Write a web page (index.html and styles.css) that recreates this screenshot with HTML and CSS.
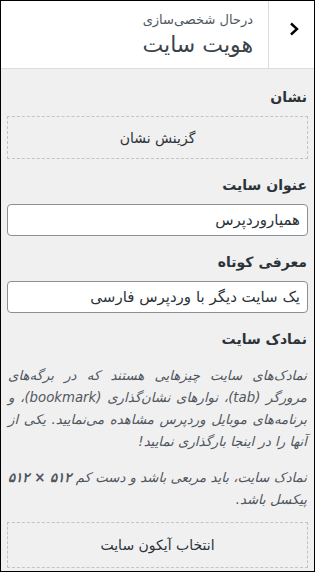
FILE: index.html
```html
<!DOCTYPE html>
<html lang="fa" dir="rtl">
<head>
<meta charset="utf-8">
<link rel="stylesheet" href="styles.css">
</head>
<body>
<div class="panel">
  <header class="head">
    <button class="back" aria-label="بازگشت">
      <svg width="12" height="14" viewBox="0 0 12 14"><path d="M3 1.5 L9 7 L3 12.5" fill="none" stroke="#000" stroke-width="2.4" stroke-linejoin="miter"/></svg>
    </button>
    <div class="title">
      <span class="sub">درحال شخصی‌سازی</span>
      <h2 class="name">هویت سایت</h2>
    </div>
  </header>
  <div class="body">
    <section class="ctrl">
      <h3 class="label">نشان</h3>
      <div class="drop">گزینش نشان</div>
    </section>
    <section class="ctrl">
      <h3 class="label">عنوان سایت</h3>
      <div class="input">همیاروردپرس</div>
    </section>
    <section class="ctrl">
      <h3 class="label">معرفی کوتاه</h3>
      <div class="input">یک سایت دیگر با وردپرس فارسی</div>
    </section>
    <section class="ctrl">
      <h3 class="label">نمادک سایت</h3>
      <p class="desc">نمادک‌های سایت چیزهایی هستند که در برگه‌های مرورگر (tab)، نوارهای نشان‌گذاری (bookmark)، و برنامه‌های موبایل وردپرس مشاهده می‌نمایید. یکی از آنها را در اینجا بارگذاری نمایید!</p>
      <p class="desc note">نمادک سایت، باید مربعی باشد و دست کم <strong class="size">۵۱۲ × ۵۱۲</strong> پیکسل باشد.</p>
      <div class="drop tall">انتخاب آیکون سایت</div>
    </section>
  </div>
</div>
</body>
</html>
```
FILE: styles.css
```css
* { box-sizing: border-box; }
html, body { margin: 0; padding: 0; }
body {
  font-family: "DejaVu Sans", "Noto Sans", sans-serif;
  background: #f0f0f1;
  color: #1d2327;
}
.panel {
  width: 315px;
  height: 572px;
  border: 1px solid #000;
  background: #f0f0f1;
  overflow: hidden;
  display: flex;
  flex-direction: column;
}
.head {
  display: flex;
  height: 68px;
  background: #fff;
  border-bottom: 1px solid #dcdcde;
  flex: none;
}
.back {
  width: 46px;
  flex: none;
  border: 0;
  border-left: 1px solid #dcdcde;
  background: #fff;
  padding: 0 0 11px 4px;
  display: flex;
  align-items: center;
  justify-content: center;
}
.title {
  flex: 1;
  display: flex;
  flex-direction: column;
  padding: 9px 15px 0 0;
}
.sub {
  font-size: 13px;
  line-height: 20px;
  color: #50575e;
}
.name {
  margin: 0;
  font-size: 22px;
  font-weight: normal;
  line-height: 30px;
  color: #3c434a;
}
.body {
  padding: 18px 6px 0 6px;
}
.label {
  margin: 0 0 9px 0;
  padding-right: 1px;
  font-size: 14px;
  line-height: 20px;
  font-weight: bold;
  color: #2c3338;
}
.ctrl { margin-bottom: 16px; }
.drop {
  height: 43px;
  border: 1px dashed #c3c4c7;
  display: flex;
  align-items: center;
  justify-content: center;
  font-size: 14px;
  color: #2c3338;
}
.drop.tall { height: 46px; margin-top: 11px; }
.input {
  height: 32px;
  background: #fff;
  border: 1px solid #8c8f94;
  border-radius: 4px;
  padding: 0 7px;
  display: flex;
  align-items: center;
  font-size: 15px;
  color: #2c3338;
}
.desc {
  margin: 16px 0 0 0;
  padding: 0 1px;
  font-size: 13.3px;
  line-height: 22px;
  font-style: italic;
  text-align: justify;
  color: #50575e;
}
.desc.note { margin-top: 14px; }
.size { font-weight: bold; white-space: nowrap; unicode-bidi: isolate; }
```
